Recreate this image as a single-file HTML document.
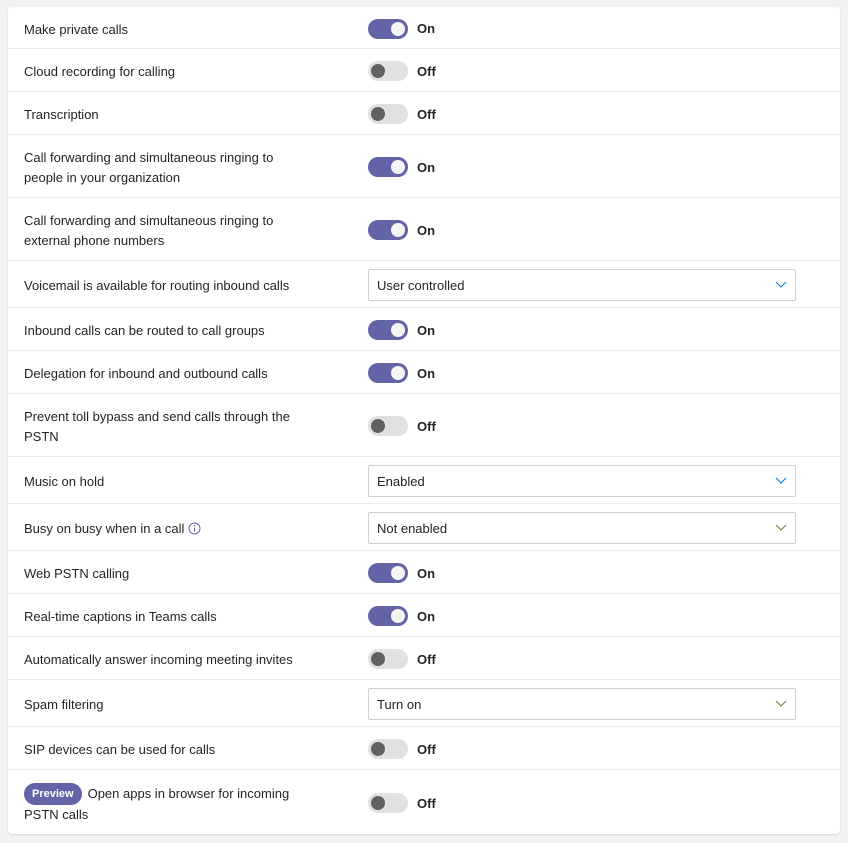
<!DOCTYPE html>
<html><head><style>
body{margin:0;background:#f3f2f1;font-family:"Liberation Sans",sans-serif;font-size:13px;color:#242424;width:848px;height:843px;overflow:hidden}
.card{position:absolute;left:8px;top:7px;width:832px;height:827px;background:#fff;border-radius:4px;box-shadow:0 1px 2px rgba(0,0,0,.12)}
.row{position:relative;box-sizing:border-box;border-bottom:1px solid #ebebeb;display:flex;align-items:center}
.row:last-child{border-bottom:none}
.lab{position:absolute;left:16px;width:282px;line-height:20px;transform:translateY(2px)}
.ctl{position:absolute;left:360px;display:flex;align-items:center;transform:translateY(1px)}
.tg{width:40px;height:20px;border-radius:10px;box-sizing:border-box;position:relative}
.tg.on{background:#6264a7}
.tg.off{background:#e1e1e1}
.tg::after{content:"";position:absolute;top:3px;width:14px;height:14px;border-radius:50%}
.tg.on::after{right:3px;background:#f5f5f5}
.tg.off::after{left:3px;background:#616161}
.st{margin-left:9px;font-weight:bold;font-size:13px}
.dd{width:428px;height:32px;box-sizing:border-box;border:1px solid #d1d1d1;border-radius:2px;display:flex;align-items:center;padding-left:8px;position:relative}
.dd svg{position:absolute;right:8px;top:11px}
.pv{display:inline-block;background:#6264a7;color:#fff;font-weight:bold;font-size:11px;line-height:14px;border-radius:12px;padding:4px 8px;margin-right:6px;vertical-align:1px}
</style></head><body><div class="card">
<div class="row" style="height:42px"><div class="lab">Make private calls</div><div class="ctl"><div class="tg on"></div><span class="st">On</span></div></div>
<div class="row" style="height:43px"><div class="lab">Cloud recording for calling</div><div class="ctl"><div class="tg off"></div><span class="st">Off</span></div></div>
<div class="row" style="height:43px"><div class="lab">Transcription</div><div class="ctl"><div class="tg off"></div><span class="st">Off</span></div></div>
<div class="row" style="height:63px"><div class="lab">Call forwarding and simultaneous ringing to people in your organization</div><div class="ctl"><div class="tg on"></div><span class="st">On</span></div></div>
<div class="row" style="height:63px"><div class="lab">Call forwarding and simultaneous ringing to external phone numbers</div><div class="ctl"><div class="tg on"></div><span class="st">On</span></div></div>
<div class="row" style="height:47px"><div class="lab">Voicemail is available for routing inbound calls</div><div class="ctl"><div class="dd">User controlled<svg width="12" height="8"><path d="M1 1l5 5 5-5" fill="none" stroke="#0078d4" stroke-width="1"/></svg></div></div></div>
<div class="row" style="height:43px"><div class="lab">Inbound calls can be routed to call groups</div><div class="ctl"><div class="tg on"></div><span class="st">On</span></div></div>
<div class="row" style="height:43px"><div class="lab">Delegation for inbound and outbound calls</div><div class="ctl"><div class="tg on"></div><span class="st">On</span></div></div>
<div class="row" style="height:63px"><div class="lab">Prevent toll bypass and send calls through the PSTN</div><div class="ctl"><div class="tg off"></div><span class="st">Off</span></div></div>
<div class="row" style="height:47px"><div class="lab">Music on hold</div><div class="ctl"><div class="dd">Enabled<svg width="12" height="8"><path d="M1 1l5 5 5-5" fill="none" stroke="#0078d4" stroke-width="1"/></svg></div></div></div>
<div class="row" style="height:47px"><div class="lab">Busy on busy when in a call <svg width="13" height="13" style="vertical-align:-2px"><circle cx="6.5" cy="6.5" r="5.5" fill="none" stroke="#6264a7"/><path d="M6.5 5.5v4" stroke="#6264a7"/><circle cx="6.5" cy="3.7" r=".7" fill="#6264a7"/></svg></div><div class="ctl"><div class="dd">Not enabled<svg width="12" height="8"><path d="M1 1l5 5 5-5" fill="none" stroke="#8a6d3b" stroke-width="1"/></svg></div></div></div>
<div class="row" style="height:43px"><div class="lab">Web PSTN calling</div><div class="ctl"><div class="tg on"></div><span class="st">On</span></div></div>
<div class="row" style="height:43px"><div class="lab">Real-time captions in Teams calls</div><div class="ctl"><div class="tg on"></div><span class="st">On</span></div></div>
<div class="row" style="height:43px"><div class="lab">Automatically answer incoming meeting invites</div><div class="ctl"><div class="tg off"></div><span class="st">Off</span></div></div>
<div class="row" style="height:47px"><div class="lab">Spam filtering</div><div class="ctl"><div class="dd">Turn on<svg width="12" height="8"><path d="M1 1l5 5 5-5" fill="none" stroke="#8a6d3b" stroke-width="1"/></svg></div></div></div>
<div class="row" style="height:43px"><div class="lab">SIP devices can be used for calls</div><div class="ctl"><div class="tg off"></div><span class="st">Off</span></div></div>
<div class="row" style="height:64px"><div class="lab"><span class="pv">Preview</span>Open apps in browser for incoming PSTN calls</div><div class="ctl"><div class="tg off"></div><span class="st">Off</span></div></div>
</div></body></html>
